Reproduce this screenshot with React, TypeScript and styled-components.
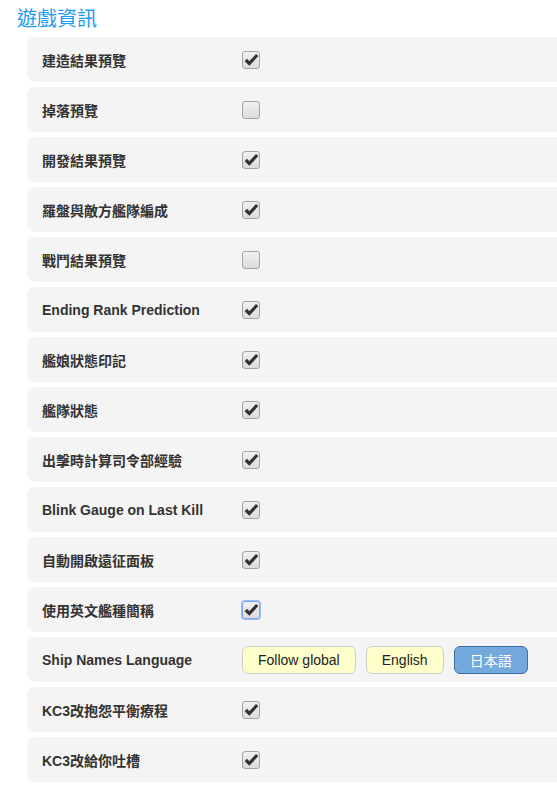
import React from 'react';
import styled, { createGlobalStyle } from 'styled-components';

const GlobalStyle = createGlobalStyle`
  body {
    margin: 0;
    background: #ffffff;
    font-family: "Liberation Sans", Arial, "Noto Sans CJK TC", sans-serif;
  }
`;

const Page = styled.div`
  padding: 6px 0 0 17px;
  overflow: hidden;
  width: 557px;
  box-sizing: border-box;
`;

const Title = styled.h2`
  margin: 0 0 5px 0;
  font-size: 20px;
  font-weight: normal;
  line-height: 26px;
  color: #1a9bf0;
  font-family: "Liberation Sans", "Noto Sans CJK TC", sans-serif;
`;

const List = styled.div`
  display: flex;
  flex-direction: column;
  gap: 5px;
  margin-left: 10px;
`;

const Row = styled.div`
  display: flex;
  align-items: center;
  height: 45px;
  width: 560px;
  background: #f4f4f4;
  border-radius: 8px 0 0 8px;
  padding-left: 15px;
  box-sizing: border-box;
`;

const Label = styled.div`
  width: 200px;
  font-size: 14px;
  font-weight: bold;
  color: #333;
  font-family: "Liberation Sans", Arial, "Noto Sans CJK TC", sans-serif;
`;

const Box = styled.div<{ $focus?: boolean }>`
  width: 18px;
  height: 18px;
  box-sizing: border-box;
  border: 1px solid ${({ $focus }) => ($focus ? '#7aa7f0' : '#a4a4a4')};
  box-shadow: ${({ $focus }) => ($focus ? '0 0 0 1px #9cbdf5' : 'none')};
  border-radius: 3px;
  background: linear-gradient(#f0f0f0, #dcdcdc);
  display: flex;
  align-items: center;
  justify-content: center;
`;

const Buttons = styled.div`
  display: flex;
  gap: 10px;
`;

const LangButton = styled.div<{ $active?: boolean }>`
  height: 28px;
  box-sizing: border-box;
  padding: 0 15px;
  display: flex;
  align-items: center;
  border-radius: 6px;
  font-size: 14px;
  border: 1px solid ${({ $active }) => ($active ? '#3f70a8' : '#cfcfcf')};
  background: ${({ $active }) => ($active ? '#74a9dd' : '#ffffcc')};
  color: ${({ $active }) => ($active ? '#ffffff' : '#222')};
  font-family: "Liberation Sans", Arial, "Noto Sans CJK JP", sans-serif;
`;

const Check = () => (
  <svg width="15" height="13" viewBox="0 0 15 13">
    <path d="M1.8 7 L5.3 10.5 L13.2 2" fill="none" stroke="#333" strokeWidth="3.2" strokeLinejoin="miter" />
  </svg>
);

type Item = { label: string; checked: boolean; focus?: boolean };

const items: Item[] = [
  { label: '建造結果預覽', checked: true },
  { label: '掉落預覽', checked: false },
  { label: '開發結果預覽', checked: true },
  { label: '羅盤與敵方艦隊編成', checked: true },
  { label: '戰鬥結果預覽', checked: false },
  { label: 'Ending Rank Prediction', checked: true },
  { label: '艦娘狀態印記', checked: true },
  { label: '艦隊狀態', checked: true },
  { label: '出擊時計算司令部經驗', checked: true },
  { label: 'Blink Gauge on Last Kill', checked: true },
  { label: '自動開啟遠征面板', checked: true },
  { label: '使用英文艦種簡稱', checked: true, focus: true },
];

const tail: Item[] = [
  { label: 'KC3改抱怨平衡療程', checked: true },
  { label: 'KC3改給你吐槽', checked: true },
];

const CheckRow = ({ item }: { item: Item }) => (
  <Row>
    <Label>{item.label}</Label>
    <Box $focus={item.focus}>{item.checked && <Check />}</Box>
  </Row>
);

export default function App() {
  return (
    <Page>
      <GlobalStyle />
      <Title>遊戲資訊</Title>
      <List>
        {items.map((it) => (
          <CheckRow key={it.label} item={it} />
        ))}
        <Row>
          <Label>Ship Names Language</Label>
          <Buttons>
            <LangButton>Follow global</LangButton>
            <LangButton>English</LangButton>
            <LangButton $active>日本語</LangButton>
          </Buttons>
        </Row>
        {tail.map((it) => (
          <CheckRow key={it.label} item={it} />
        ))}
      </List>
    </Page>
  );
}
